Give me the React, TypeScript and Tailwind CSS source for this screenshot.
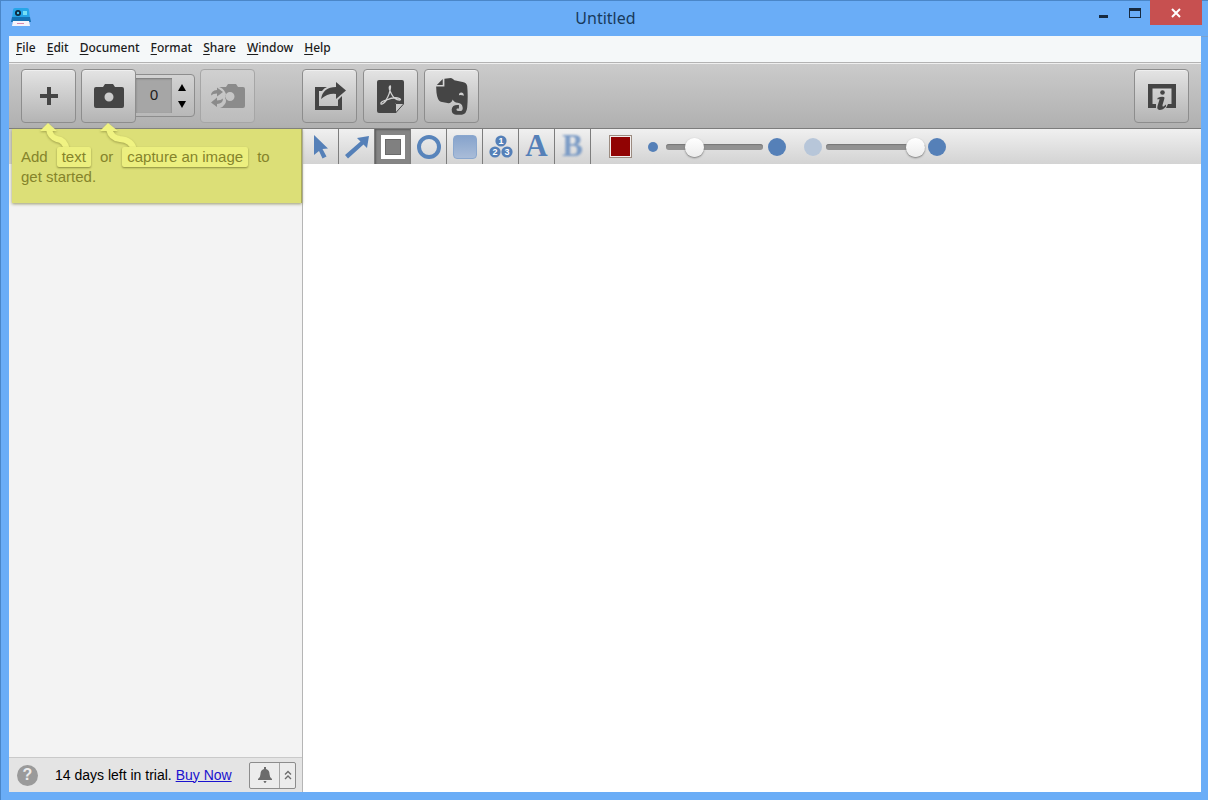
import { useState, type ReactNode } from "react";

const menus = ["File", "Edit", "Document", "Format", "Share", "Window", "Help"];

function BigButton({ label, disabled, children }: { label: string; disabled?: boolean; children: ReactNode }) {
  return (
    <button
      type="button"
      aria-label={label}
      disabled={disabled}
      className={
        "relative z-10 flex h-[54px] w-[55px] shrink-0 items-center justify-center rounded-[4px] border " +
        (disabled
          ? "border-[#a6a6a6] bg-linear-to-b from-[#d0d0d0] to-[#bcbcbc] text-[#8b8b8b]"
          : "border-[#8d8d8d] bg-linear-to-b from-[#e4e4e4] to-[#b4b4b4] text-[#454545] shadow-[inset_0_1px_0_#efefef]")
      }
    >
      {children}
    </button>
  );
}

function PlusIcon() {
  return (
    <svg width="20" height="20" viewBox="0 0 20 20" fill="currentColor">
      <path d="M8 1h4v7h7v4h-7v7H8v-7H1V8h7z" />
    </svg>
  );
}

function CameraIcon() {
  return (
    <svg width="30" height="26" viewBox="0 0 30 26" fill="currentColor">
      <path
        fillRule="evenodd"
        d="M2 4h7l2-3h8l2 3h7q2 0 2 2v17q0 2-2 2H2q-2 0-2-2V6q0-2 2-2zM15 9.500a4.500 4.500 0 1 0 0 9a4.500 4.500 0 1 0 0-9z"
      />
    </svg>
  );
}

function RecaptureIcon() {
  return (
    <svg width="36" height="26" viewBox="0 0 36 26" fill="currentColor">
      <path
        fillRule="evenodd"
        d="M9 4h7l2-3h8l2 3h5q2 0 2 2v17q0 2-2 2H10q3-1 5-4 2-3 0-6 2-3 0-6-2-4-6-5zM20 9a4.500 4.500 0 1 0 0 9a4.500 4.500 0 1 0 0-9z"
      />
      <path d="M1 12.500q0-5 6-5.500V4.500l6 4.500-6 4.500v-3q-4 0-6 2zM13 15.500q0 5-6 5.500v3L1 19.500 7 14.500v3q4 0 6-2z" />
    </svg>
  );
}

function ShareIcon() {
  return (
    <svg width="32" height="28" viewBox="0 0 32 28" fill="currentColor">
      <path d="M1 5h12q-3 1-5 4H5v15h19v-6l4-4v14H1z" />
      <path d="M7 17Q9 5 22 5V0l10 8.500L22 17v-5q-8-1-15 5z" />
    </svg>
  );
}

function PdfIcon() {
  return (
    <svg width="27" height="33" viewBox="0 0 27 33">
      <path d="M2 0h23q2 0 2 2v21H18v10H2q-2 0-2-2V2Q0 0 2 0z" fill="#454545" />
      <path d="M18.500 33v-9.500H27z" fill="#c9c9c9" stroke="#454545" />
      <path
        d="M4 24q-1-2 5-4 4-6 4.500-13 0-2-1-.5-1 2 2 7.500 3 6 8 6 2-.5 0-1.500-5-2-13 1.500-4 5-5.500 4z"
        fill="none"
        stroke="#d2d2d2"
        strokeWidth="1.300"
      />
    </svg>
  );
}

function ElephantIcon() {
  return (
    <svg width="32" height="37" viewBox="42 36 96 112" fill="currentColor">
      <path d="M44 57L62 39V57z" />
      <path d="M67 38L87 36Q94 38 97 43L122 48Q134 50 136 60Q139 90 136 125Q134 145 120 147H102Q89 145 89 131Q91 118 106 118H111V128H105Q101 134 108 136H118Q124 134 122 124Q120 112 107 111Q96 110 92 101Q88 114 76 112L56 108Q46 105 43 80L42 62H67z" />
      <path d="M111 88Q111 80 118 80Q125 80 126 90Q118 86 111 88z" fill="#cfcfcf" />
    </svg>
  );
}

function InfoIcon() {
  return (
    <svg width="28" height="28" viewBox="0 0 28 28" fill="currentColor">
      <path d="M0 2h28v24H18l2-4h3.500V6.500h-19V22H8v4H0z" />
      <circle cx="14.500" cy="10.500" r="2.300" />
      <path d="M9.500 16q4-2 6.500-1 .8.500.3 2L14.500 23q-.3 2 1 1.500l2.500-2v2q-3 3.500-6.500 3.500-3-.5-2-4l2-6.500q0-1-2 0z" />
    </svg>
  );
}

function ToolButton({ label, pressed, onClick, children }: { label: string; pressed: boolean; onClick: () => void; children: ReactNode }) {
  return (
    <button
      type="button"
      aria-label={label}
      aria-pressed={pressed}
      onClick={onClick}
      className={
        "flex h-full w-9 shrink-0 items-center justify-center border-r border-[#7d7d7d] " +
        (pressed ? "bg-[#858585] shadow-[inset_1px_1px_2px_#5c5c5c]" : "")
      }
    >
      {children}
    </button>
  );
}

const tools: { name: string; icon: ReactNode }[] = [
  {
    name: "Select",
    icon: (
      <svg width="16" height="24" viewBox="0 0 16 24">
        <path d="M1 0l14 13.500-5.500.5 4 7.500-4 2L6 16l-5 4z" fill="#5580b8" />
      </svg>
    ),
  },
  {
    name: "Arrow",
    icon: (
      <svg width="24" height="24" viewBox="0 0 24 24">
        <path d="M0 20L15.500 6.500 12 3l12-2-2 12-3.500-3.500L3 23.500z" fill="#5580b8" />
      </svg>
    ),
  },
  {
    name: "Rectangle",
    icon: <span className="size-6 border-4 border-white bg-[#808080] shadow-[inset_0_0_0_1px_#6a6a6a]" />,
  },
  { name: "Ellipse", icon: <span className="size-6 rounded-full border-4 border-[#5884bb]" /> },
  {
    name: "Filled rectangle",
    icon: <span className="size-6 rounded-[4px] border border-[#8aa7ce] bg-linear-to-b from-[#86a3cc] to-[#a9bcd8]" />,
  },
  {
    name: "Numbered steps",
    icon: (
      <svg width="24" height="24" viewBox="0 0 24 24" fontFamily="Liberation Sans, sans-serif" fontSize="9" fontWeight="700" textAnchor="middle">
        <g fill="#5580b8">
          <circle cx="12" cy="6" r="5.600" />
          <circle cx="6" cy="17" r="5.600" />
          <circle cx="18" cy="17" r="5.600" />
        </g>
        <g fill="#fff">
          <text x="12" y="9">1</text>
          <text x="6" y="20">2</text>
          <text x="18" y="20">3</text>
        </g>
      </svg>
    ),
  },
  {
    name: "Text",
    icon: <span className="pb-[2px] font-['Liberation_Serif',serif] text-[31px] leading-8 font-bold text-[#5580b8]">A</span>,
  },
  {
    name: "Blur",
    icon: <span className="pb-[2px] font-['Liberation_Serif',serif] text-[31px] leading-8 font-bold text-[#7b9bc5] blur-[1px]">B</span>,
  },
];

const sliderClass =
  "h-5 cursor-pointer appearance-none bg-transparent [&::-webkit-slider-runnable-track]:h-[6px] [&::-webkit-slider-runnable-track]:rounded-full [&::-webkit-slider-runnable-track]:bg-[#929292] [&::-webkit-slider-runnable-track]:shadow-[inset_0_1px_1px_#777] [&::-webkit-slider-thumb]:-mt-[6px] [&::-webkit-slider-thumb]:size-[19px] [&::-webkit-slider-thumb]:appearance-none [&::-webkit-slider-thumb]:rounded-full [&::-webkit-slider-thumb]:bg-linear-to-b [&::-webkit-slider-thumb]:from-white [&::-webkit-slider-thumb]:to-[#ececec] [&::-webkit-slider-thumb]:shadow-[0_1px_2px_#777]";

function TitleBar() {
  return (
    <header className="flex h-9 shrink-0 items-start">
      <div className="flex w-[150px] pt-2 pl-[2px]">
        <svg width="20" height="19" viewBox="0 0 20 19">
          <path d="M2 2q0-2 2-2h12q2 0 2 2l1 9H1z" fill="#27a5e8" />
          <path d="M1 9h18l1 5H0z" fill="#1672b4" />
          <circle cx="7" cy="5" r="3" fill="#10283c" />
          <circle cx="7" cy="5" r="1.200" fill="#41c2ef" />
          <path d="M12 3h4v4h-4z" fill="#75e0f6" />
          <path d="M2 13h16l1 5H1z" fill="#f6f4fa" />
          <path d="M6 15h7v1H6z" fill="#d987ad" />
        </svg>
      </div>
      <h1 className="flex-1 pt-[6px] text-center text-base leading-6 text-[#183a5c]">Untitled</h1>
      <div className="flex w-[150px] justify-end">
        <button type="button" aria-label="Minimize" className="flex h-[26px] w-[31px] items-center justify-center">
          <span className="mt-[6px] h-[3px] w-[9px] bg-[#172a40]" />
        </button>
        <button type="button" aria-label="Maximize" className="flex h-[26px] w-[31px] items-center justify-center">
          <span className="h-[10px] w-3 border border-t-[3px] border-[#172a40]" />
        </button>
        <button type="button" aria-label="Close" className="flex h-[25px] w-[52px] items-center justify-center bg-[#c75050]">
          <svg width="10" height="10" viewBox="0 0 10 10" stroke="#fff" strokeWidth="2">
            <path d="M1 1l8 8M9 1l-8 8" />
          </svg>
        </button>
      </div>
    </header>
  );
}

function Hint() {
  const tag = "relative rounded-[2px] bg-[#ecef7f] px-[5px] shadow-[0_1px_2px_#8b8c3e]";
  return (
    <div className="absolute top-0 right-0 left-[3px] z-20 h-[74px] border-r border-[#a9aa58] bg-[#dcdf77] pt-[18px] pl-[9px] font-['Liberation_Sans',sans-serif] text-[15px] leading-5 text-[#85842b] shadow-[0_1px_3px_#9a9a70]">
      <svg className="absolute -top-[7px] left-[28px] drop-shadow-[0_1px_1px_#a2a34c]" width="110" height="32" viewBox="0 0 110 32">
        <g fill="none" stroke="#f0f382" strokeWidth="6">
          <path d="M9 7q1 8 8 10 8 1 10 11" />
          <path d="M69 7q2 9 11 10 12 1 14 11" />
        </g>
        <path d="M0 9L8 1l9 8zM60 9l8-8 10 8z" fill="#f0f382" />
      </svg>
      <p className="flex flex-wrap gap-x-[9px]">
        <span>Add</span>
        <span className={tag}>text</span>
        <span>or</span>
        <span className={tag}>capture an image</span>
        <span>to</span>
        <span>get started.</span>
      </p>
    </div>
  );
}

export default function App() {
  const [tool, setTool] = useState("Rectangle");
  const [delay, setDelay] = useState(0);

  return (
    <div className="flex min-h-screen flex-col border-t border-l border-[#4a86c8] bg-[#6aadf7] pr-[7px] pb-2 pl-2 font-['Noto_Sans',sans-serif]">
      <div className="-mt-px -mr-[7px] border-b border-[#7aa3d0] pr-[6px]">
        <TitleBar />
      </div>
      <div className="-mt-px flex flex-1 flex-col bg-white">
        <nav aria-label="Main menu" className="flex h-[27px] shrink-0 gap-[11px] border-b border-b-[#b3b3b3] bg-[#f5f8f9] px-[7px] text-[12px] leading-[23px] font-medium text-[#1c1c1c]">
          {menus.map((m) => (
            <button key={m} type="button" className="h-[23px]">
              <span className="underline underline-offset-2">{m[0]}</span>
              {m.slice(1)}
            </button>
          ))}
        </nav>

        <div role="toolbar" aria-label="Document actions" className="flex h-[66px] shrink-0 items-start border-t border-b border-t-[#efefef] border-b-[#7c7c7c] bg-linear-to-b from-[#cbcbcb] to-[#b0b0b0] pt-[5px] pr-3">
          <div className="flex w-[293px] gap-[5px] pl-3">
            <BigButton label="Add text">
              <PlusIcon />
            </BigButton>
            <div className="flex items-start">
              <BigButton label="Capture image">
                <CameraIcon />
              </BigButton>
              <div className="mt-[5px] -ml-px flex h-[43px] w-[60px] items-center rounded-r-[4px] border border-[#8d8d8d] bg-linear-to-b from-[#d3d3d3] to-[#b8b8b8]">
                <input
                  type="text"
                  inputMode="numeric"
                  aria-label="Capture delay"
                  value={delay}
                  onChange={(e) => setDelay(Number(e.target.value) || 0)}
                  className="h-[35px] w-9 bg-[#a6a6a6] pb-1 text-center text-[15px] text-[#202020] shadow-[inset_0_1px_2px_#777]"
                />
                <div className="flex flex-1 flex-col items-center gap-[10px] pr-[2px]">
                  <button type="button" aria-label="Increase delay" onClick={() => setDelay(delay + 1)}>
                    <svg width="8" height="7" viewBox="0 0 8 7">
                      <path d="M4 0l4 7H0z" />
                    </svg>
                  </button>
                  <button type="button" aria-label="Decrease delay" onClick={() => setDelay(Math.max(0, delay - 1))}>
                    <svg width="8" height="7" viewBox="0 0 8 7">
                      <path d="M0 0h8L4 7z" />
                    </svg>
                  </button>
                </div>
              </div>
            </div>
            <BigButton label="Recapture" disabled>
              <RecaptureIcon />
            </BigButton>
          </div>
          <div className="flex flex-1 gap-[6px]">
            <BigButton label="Share">
              <ShareIcon />
            </BigButton>
            <BigButton label="Export PDF">
              <PdfIcon />
            </BigButton>
            <BigButton label="Send to Evernote">
              <ElephantIcon />
            </BigButton>
          </div>
          <BigButton label="Inspector">
            <InfoIcon />
          </BigButton>
        </div>

        <div className="flex flex-1">
          <aside className="relative flex w-[294px] shrink-0 flex-col border-r border-[#b5b5b5] bg-[#f3f3f3]">
            <div className="h-[35px] bg-[#cfcfcf]" />
            <Hint />
            <div className="flex-1" />
            <footer className="flex h-[35px] items-center border-t border-[#c9c9c9] bg-[#e4e4e4] pr-[6px] pl-2 font-['Liberation_Sans',sans-serif] text-[14px] text-black">
              <button type="button" aria-label="Help" className="flex size-[21px] items-center justify-center rounded-full bg-[#9a9a9a] text-[16px] leading-5 font-bold text-[#ececec]">
                ?
              </button>
              <p className="flex-1 pl-[17px] whitespace-nowrap">
                14 days left in trial.{" "}
                <a href="#buy" className="text-[#1a12cf] underline">
                  Buy Now
                </a>
              </p>
              <div className="flex h-[27px] w-[47px] rounded-[2px] border border-[#8c8c8c] bg-[#ececec] text-[#6c6c6c]">
                <button type="button" aria-label="Notifications" className="flex w-[29px] items-center justify-center">
                  <svg width="14" height="16" viewBox="0 0 14 16" fill="currentColor">
                    <path d="M6 0h2v2q3.500 1 3.500 5 0 3.500 2.500 5v1H0v-1q2.500-1.500 2.500-5 0-4 3.500-5zM5.500 14h3q-.5 2-1.500 2t-1.500-2z" />
                  </svg>
                </button>
                <button type="button" aria-label="Show more" className="flex flex-1 items-center justify-center border-l border-[#a5a5a5]">
                  <svg width="8" height="10" viewBox="0 0 8 10" fill="none" stroke="currentColor" strokeWidth="1.400">
                    <path d="M1 4.500l3-3 3 3M1 9l3-3 3 3" />
                  </svg>
                </button>
              </div>
            </footer>
          </aside>

          <main className="flex min-w-0 flex-1 flex-col bg-white">
            <div role="toolbar" aria-label="Drawing tools" className="flex h-[35px] shrink-0 items-center bg-linear-to-b from-[#f0f0f0] to-[#d3d3d3]">
              {tools.map((t) => (
                <ToolButton key={t.name} label={t.name} pressed={tool === t.name} onClick={() => setTool(t.name)}>
                  {t.icon}
                </ToolButton>
              ))}
              <button type="button" aria-label="Color" className="ml-[18px] size-[23px] border border-[#9b8b80] bg-[#910303] shadow-[inset_0_0_0_1px_#f2eeee]" />
              <label className="ml-4 flex items-center">
                <span className="size-[10px] rounded-full bg-[#5580b8]" />
                <input type="range" aria-label="Line width" defaultValue={24} className={"ml-2 w-[97px] " + sliderClass} />
                <span className="ml-[5px] size-[18px] rounded-full bg-[#5580b8]" />
              </label>
              <label className="ml-[18px] flex items-center">
                <span className="size-[18px] rounded-full bg-[#b7c6d9]" />
                <input type="range" aria-label="Opacity" defaultValue={100} className={"ml-1 w-[99px] " + sliderClass} />
                <span className="ml-[3px] size-[18px] rounded-full bg-[#5580b8]" />
              </label>
            </div>
            <section aria-label="Canvas" className="flex-1 bg-white" />
          </main>
        </div>
      </div>
    </div>
  );
}
